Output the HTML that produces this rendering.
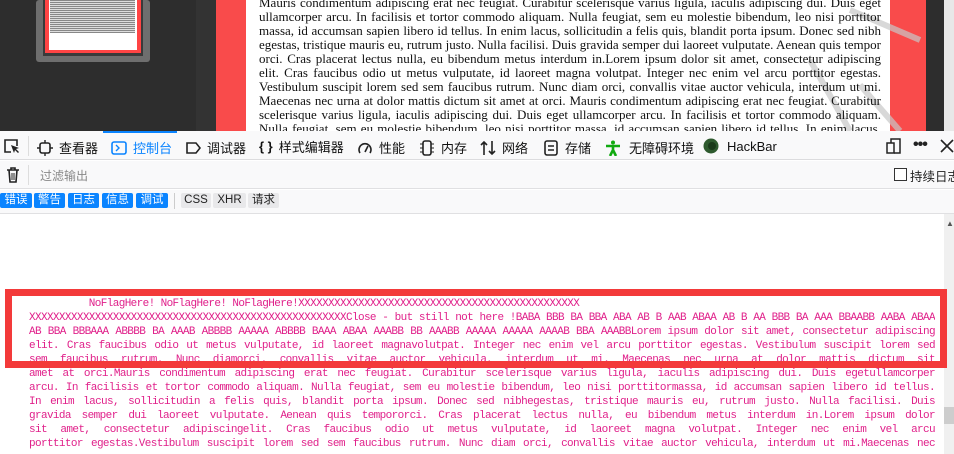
<!DOCTYPE html>
<html><head><meta charset="utf-8"><style>
*{margin:0;padding:0;box-sizing:border-box}
body{width:954px;height:454px;overflow:hidden;position:relative;background:#fff;font-family:"Liberation Sans","Noto Sans CJK SC",sans-serif}
.abs{position:absolute}
.pg{position:absolute;left:259px;width:622px;font:13px/14px "Liberation Serif",serif;color:#111}
.pg div{text-align:justify;text-align-last:justify;height:14px;white-space:normal}
.tb{font-size:13px;color:#111;display:flex;align-items:center;position:absolute}
.con{position:absolute;left:29px;width:906px;font:11px/14px "Liberation Mono",monospace;letter-spacing:-0.62px;color:#e0208a}
.con div{height:14px;text-align:justify;text-align-last:justify;white-space:normal;overflow:hidden}
.fb{position:absolute;top:193px;height:15px;font-size:11.5px;line-height:15px;color:#fff;background:#0a84ff;text-align:center;border-radius:2px}
.fg{position:absolute;top:193px;height:15px;font-size:11.5px;line-height:15px;color:#222;background:#e8e8ea;text-align:center;border-radius:2px}
</style></head><body>
<div class="abs" style="left:0;top:0;width:216px;height:131px;background:#2d2d2d"></div>
<div class="abs" style="left:36px;top:0;width:114px;height:62px;background:#6e6e6e;border-radius:3px"></div>
<div class="abs" style="left:43px;top:0;width:100px;height:56px;background:#3a3a3a"></div>
<div class="abs" style="left:45px;top:0;width:96px;height:53px;background:#f44"></div>
<div class="abs" style="left:49px;top:0;width:88px;height:50px;background:#fff"></div>
<div class="abs" style="left:50px;top:0;width:85px;height:33px;background:repeating-linear-gradient(#888 0 1px,#ddd 1px 2px)"></div>
<div class="abs" style="left:196px;top:0;width:20px;height:131px;background:#333"></div>
<div class="abs" style="left:216px;top:0;width:30px;height:131px;background:#f94b4b"></div>
<div class="abs" style="left:246px;top:0;width:644px;height:131px;background:#fff"></div>
<div class="abs" style="left:890px;top:0;width:36px;height:131px;background:#f94b4b"></div>
<div class="abs" style="left:926px;top:0;width:18px;height:131px;background:#2d2d2d"></div>
<div class="abs" style="left:944px;top:0;width:10px;height:131px;background:#e8e8e8"></div>
<svg class="abs" style="left:750px;top:0" width="180" height="131"><path d="M100 10 L170 40 M110 85 L150 131 M60 60 L100 131" stroke="#c8c8c8" stroke-width="6" fill="none" opacity="0.7"/></svg>
<div class="pg" style="top:-4px">
<div>Mauris condimentum adipiscing erat nec feugiat. Curabitur scelerisque varius ligula, iaculis adipiscing dui. Duis eget</div>
<div>ullamcorper arcu. In facilisis et tortor commodo aliquam. Nulla feugiat, sem eu molestie bibendum, leo nisi porttitor</div>
<div>massa, id accumsan sapien libero id tellus. In enim lacus, sollicitudin a felis quis, blandit porta ipsum. Donec sed nibh</div>
<div>egestas, tristique mauris eu, rutrum justo. Nulla facilisi. Duis gravida semper dui laoreet vulputate. Aenean quis tempor</div>
<div>orci. Cras placerat lectus nulla, eu bibendum metus interdum in.Lorem ipsum dolor sit amet, consectetur adipiscing</div>
<div>elit. Cras faucibus odio ut metus vulputate, id laoreet magna volutpat. Integer nec enim vel arcu porttitor egestas.</div>
<div>Vestibulum suscipit lorem sed sem faucibus rutrum. Nunc diam orci, convallis vitae auctor vehicula, interdum ut mi.</div>
<div>Maecenas nec urna at dolor mattis dictum sit amet at orci. Mauris condimentum adipiscing erat nec feugiat. Curabitur</div>
<div>scelerisque varius ligula, iaculis adipiscing dui. Duis eget ullamcorper arcu. In facilisis et tortor commodo aliquam.</div>
<div>Nulla feugiat, sem eu molestie bibendum, leo nisi porttitor massa, id accumsan sapien libero id tellus. In enim lacus,</div>
</div>
<!-- toolbar -->
<div class="abs" style="left:0;top:131px;width:954px;height:29px;background:#f9f9fa;border-bottom:1px solid #dcdcde"></div>
<div class="abs" style="left:103px;top:131px;width:74px;height:2px;background:#0a84ff"></div>
<div class="abs" style="left:28px;top:136px;width:1px;height:20px;background:#ddd"></div>
<svg class="abs" style="left:3px;top:138px" width="18" height="16"><path d="M8 14H2V2h12v6" stroke="#222" stroke-width="1.6" fill="none"/><path d="M8 7l8 3-3 1 3 3-1 1-3-3-1 3z" fill="#222"/></svg>
<div class="tb" style="left:37px;top:138px"><svg width="16" height="16"><rect x="3" y="3" width="10" height="10" rx="2" stroke="#222" stroke-width="1.6" fill="none"/><path d="M8 0v3M8 13v3M0 8h3M13 8h3" stroke="#222" stroke-width="1.4"/></svg><span style="margin-left:6px">查看器</span></div>
<div class="tb" style="left:111px;top:138px;color:#0a84ff"><svg width="16" height="16"><rect x="1" y="2" width="14" height="12" rx="2" stroke="#0a84ff" stroke-width="1.6" fill="none"/><path d="M5 5l3 3-3 3" stroke="#0a84ff" stroke-width="1.4" fill="none"/></svg><span style="margin-left:6px">控制台</span></div>
<div class="tb" style="left:185px;top:138px"><svg width="16" height="16"><path d="M2 3h9l4 5-4 5H2z" stroke="#222" stroke-width="1.6" fill="none"/></svg><span style="margin-left:6px">调试器</span></div>
<div class="tb" style="left:259px;top:137px"><span style="font-weight:bold">{ }</span><span style="margin-left:6px">样式编辑器</span></div>
<div class="tb" style="left:357px;top:138px"><svg width="16" height="16"><path d="M3 13A6 6 0 1 1 13 13" stroke="#222" stroke-width="1.6" fill="none"/><path d="M8 12l3-6" stroke="#222" stroke-width="1.6"/></svg><span style="margin-left:6px">性能</span></div>
<div class="tb" style="left:419px;top:138px"><svg width="16" height="16"><rect x="4" y="1" width="8" height="14" rx="2" stroke="#222" stroke-width="1.6" fill="none"/><path d="M1 4h3M1 8h3M1 12h3M12 4h3M12 8h3M12 12h3" stroke="#222"/></svg><span style="margin-left:6px">内存</span></div>
<div class="tb" style="left:480px;top:138px"><svg width="16" height="16"><path d="M4 15V2M1 5l3-3 3 3M12 1v13M9 11l3 3 3-3" stroke="#222" stroke-width="1.6" fill="none"/></svg><span style="margin-left:6px">网络</span></div>
<div class="tb" style="left:543px;top:138px"><svg width="16" height="16"><rect x="2" y="1" width="12" height="14" rx="2" stroke="#222" stroke-width="1.6" fill="none"/><path d="M5 6h6M5 10h6" stroke="#222" stroke-width="1.4"/></svg><span style="margin-left:6px">存储</span></div>
<div class="tb" style="left:605px;top:138px"><svg width="16" height="16"><circle cx="8" cy="2.5" r="2" fill="#1a1"/><path d="M1 6h14M8 6v4M8 10l-3 6M8 10l3 6" stroke="#1a1" stroke-width="2.6" fill="none"/></svg><span style="margin-left:8px">无障碍环境</span></div>
<div class="tb" style="left:703px;top:138px"><svg width="16" height="16"><circle cx="8" cy="8" r="7.5" fill="#2e5a2e"/><circle cx="9" cy="8" r="4" fill="#1a3a1a"/></svg><span style="margin-left:8px">HackBar</span></div>
<svg class="abs" style="left:886px;top:138px" width="16" height="16"><rect x="1" y="5" width="7" height="10" stroke="#222" stroke-width="1.5" fill="none"/><path d="M5 5V1h9v14H8" stroke="#222" stroke-width="1.5" fill="none"/></svg>
<div class="abs" style="left:913px;top:136px;font-size:16px;color:#222;font-weight:bold;letter-spacing:-1px">•••</div>
<svg class="abs" style="left:940px;top:139px" width="14" height="14"><path d="M1 1l12 12M13 1L1 13" stroke="#222" stroke-width="1.6"/></svg>
<!-- filter row -->
<div class="abs" style="left:0;top:161px;width:954px;height:28px;background:#f9f9fa;border-bottom:1px solid #e0e0e2"></div>
<svg class="abs" style="left:6px;top:167px" width="14" height="16"><path d="M1 3h12M5 3V1h4v2M3 3l1 12h6l1-12" stroke="#222" stroke-width="1.6" fill="none"/><path d="M6 6v7M8 6v7" stroke="#222"/></svg>
<div class="abs" style="left:28px;top:165px;width:1px;height:20px;background:#ddd"></div>
<div class="abs" style="left:40px;top:167px;font-size:12px;color:#888">过滤输出</div>
<div class="abs" style="left:894px;top:168px;width:13px;height:13px;border:1px solid #333;background:#fff"></div>
<div class="abs" style="left:910px;top:166px;font-size:12.5px;color:#222;white-space:nowrap">持续日志</div>
<!-- filter buttons -->
<div class="abs" style="left:0;top:190px;width:954px;height:24px;background:#f9f9fa;border-bottom:1px solid #e0e0e2"></div>
<div class="fb" style="left:0;width:32px">错误</div>
<div class="fb" style="left:34px;width:31px">警告</div>
<div class="fb" style="left:68px;width:31px">日志</div>
<div class="fb" style="left:102px;width:31px">信息</div>
<div class="fb" style="left:136px;width:32px">调试</div>
<div class="abs" style="left:174px;top:193px;width:1px;height:16px;background:#ccc"></div>
<div class="fg" style="left:181px;width:30px">CSS</div>
<div class="fg" style="left:213px;width:33px">XHR</div>
<div class="fg" style="left:248px;width:31px">请求</div>
<!-- scrollbar -->
<div class="abs" style="left:944px;top:214px;width:10px;height:240px;background:#f0f0f0"></div>
<div class="abs" style="left:944px;top:407px;width:10px;height:17px;background:#cdcdcd"></div>
<div class="abs" style="left:946px;top:219px;font-size:8px;color:#555">▲</div>
<!-- console -->
<div class="con" style="top:297px">
<div style="text-align:left;text-align-last:left;white-space:pre">          NoFlagHere! NoFlagHere! NoFlagHere!XXXXXXXXXXXXXXXXXXXXXXXXXXXXXXXXXXXXXXXXXXXXXXX</div>
<div>XXXXXXXXXXXXXXXXXXXXXXXXXXXXXXXXXXXXXXXXXXXXXXXXXXXXXClose - but still not here !BABA BBB BA BBA ABA AB B AAB ABAA AB B AA BBB BA AAA BBAABB AABA ABAA</div>
<div>AB BBA BBBAAA ABBBB BA AAAB ABBBB AAAAA ABBBB BAAA ABAA AAABB BB AAABB AAAAA AAAAA AAAAB BBA AAABBLorem ipsum dolor sit amet, consectetur adipiscing</div>
<div>elit. Cras faucibus odio ut metus vulputate, id laoreet magnavolutpat. Integer nec enim vel arcu porttitor egestas. Vestibulum suscipit lorem sed</div>
<div>sem faucibus rutrum. Nunc diamorci. convallis vitae auctor vehicula, interdum ut mi. Maecenas nec urna at dolor mattis dictum sit</div>
<div>amet at orci.Mauris condimentum adipiscing erat nec feugiat. Curabitur scelerisque varius ligula, iaculis adipiscing dui. Duis egetullamcorper</div>
<div>arcu. In facilisis et tortor commodo aliquam. Nulla feugiat, sem eu molestie bibendum, leo nisi porttitormassa, id accumsan sapien libero id tellus.</div>
<div>In enim lacus, sollicitudin a felis quis, blandit porta ipsum. Donec sed nibhegestas, tristique mauris eu, rutrum justo. Nulla facilisi. Duis</div>
<div>gravida semper dui laoreet vulputate. Aenean quis tempororci. Cras placerat lectus nulla, eu bibendum metus interdum in.Lorem ipsum dolor</div>
<div>sit amet, consectetur adipiscingelit. Cras faucibus odio ut metus vulputate, id laoreet magna volutpat. Integer nec enim vel arcu</div>
<div>porttitor egestas.Vestibulum suscipit lorem sed sem faucibus rutrum. Nunc diam orci, convallis vitae auctor vehicula, interdum ut mi.Maecenas nec</div>
</div>
<div class="abs" style="left:5px;top:289px;width:942px;height:79px;border:7px solid #f33a3a"></div>
</body></html>
